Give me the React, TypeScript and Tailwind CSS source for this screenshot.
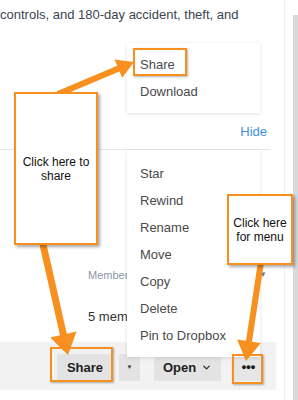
import { ChevronDown } from "lucide-react";

const ORANGE = "#f7901e";

// polygon for a thick arrow with a triangular head
const arrow = (x1: number, y1: number, x2: number, y2: number, w: number, hl: number, hw: number) => {
  const dx = x2 - x1;
  const dy = y2 - y1;
  const len = Math.hypot(dx, dy);
  const ux = dx / len;
  const uy = dy / len;
  const nx = -uy;
  const ny = ux;
  const bx = x2 - ux * hl;
  const by = y2 - uy * hl;
  const pts = [
    [x1 + (nx * w) / 2, y1 + (ny * w) / 2],
    [bx + (nx * w) / 2, by + (ny * w) / 2],
    [bx + (nx * hw) / 2, by + (ny * hw) / 2],
    [x2, y2],
    [bx - (nx * hw) / 2, by - (ny * hw) / 2],
    [bx - (nx * w) / 2, by - (ny * w) / 2],
    [x1 - (nx * w) / 2, y1 - (ny * w) / 2],
  ];
  return pts.map((p) => p.map((v) => v.toFixed(1)).join(",")).join(" ");
};

const MenuItem = ({ label }: { label: string }) => (
  <div className="h-[27px] flex items-center pl-[13px] text-[13px] text-[#4a4a4a]">{label}</div>
);

const App = () => {
  return (
    <div className="relative w-[298px] h-[400px] overflow-hidden bg-white flex font-['Liberation_Sans',Arial,sans-serif]">
      {/* page */}
      <div className="w-[285px] flex flex-col border-r border-[#f0f0f0]">
        <p className="mt-[7px] leading-[16px] text-[13px] text-[#3b4550] whitespace-nowrap">
          controls, and 180-day accident, theft, and
        </p>
        <div className="mt-[101px] mr-[13px] pb-[9px] border-b border-[#e6e6e6] flex justify-end">
          <span className="pr-[4px] leading-[16px] text-[13px] text-[#3d8fe6]">Hide</span>
        </div>
        <div className="mt-[118px] mr-[13px] pl-[88px] pr-[4px] flex items-center justify-between leading-[14px]">
          <span className="w-[39px] overflow-hidden whitespace-nowrap text-[11px] text-[#8a98a8]">Members</span>
          <span className="text-[8px] text-[#777]">▼</span>
        </div>
        <div className="mt-[27px] ml-[88px] w-[39px] overflow-hidden whitespace-nowrap leading-[16px] text-[13px] text-[#333]">
          5 members
        </div>
        <div className="mt-[17px] mr-[8px] h-[48px] bg-[#f2f2f2] flex items-start pt-[12px] text-[13px] font-bold text-[#1e1e1e]">
          <div className="ml-[57px] w-[56px] h-[27px] bg-[#e3e3e3] flex items-center justify-center">Share</div>
          <div className="ml-[6px] w-[21px] h-[27px] bg-[#e3e3e3] flex items-center justify-center text-[6px] text-[#333]">▼</div>
          <div className="ml-[14px] w-[67px] h-[27px] bg-[#e3e3e3] flex items-center justify-center gap-[5px]">
            Open
            <ChevronDown size={11} strokeWidth={2.5} />
          </div>
          <div className="ml-[13px] w-[28px] h-[27px] bg-[#e6e6e6] flex items-center justify-center text-[9px] tracking-[-1px]">●●●</div>
        </div>
      </div>
      <div className="w-[8px]" />
      <div className="w-[5px] mt-[15px] bg-[#d9d9d9]" />

      {/* dropdown menu */}
      <div className="absolute left-[127px] top-[43px] w-[133px] h-[70px] bg-white shadow-[0_1px_4px_rgba(0,0,0,0.12)] pt-[8px]">
        <MenuItem label="Share" />
        <MenuItem label="Download" />
      </div>
      <div className="absolute left-[127px] top-[150px] w-[133px] h-[207px] bg-white shadow-[0_1px_4px_rgba(0,0,0,0.12)] pt-[10px]">
        {["Star", "Rewind", "Rename", "Move", "Copy", "Delete", "Pin to Dropbox"].map((l) => (
          <MenuItem key={l} label={l} />
        ))}
      </div>

      {/* annotations */}
      <svg className="absolute inset-0 pointer-events-none" width="298" height="400">
        <polygon points={arrow(58, 94, 134, 62, 6, 17, 20)} fill={ORANGE} />
        <polygon points={arrow(42, 240, 68, 355, 7, 21, 27)} fill={ORANGE} />
        <polygon points={arrow(261, 262, 246, 361, 6, 20, 24)} fill={ORANGE} />
      </svg>
      <div className="absolute left-[133px] top-[48px] w-[54px] h-[28px] border-2 border-[#f7901e] shadow-[1px_1px_2px_rgba(0,0,0,0.3)]" />
      <div className="absolute left-[50px] top-[347px] w-[63px] h-[35px] border-2 border-[#f7901e] shadow-[1px_1px_2px_rgba(0,0,0,0.3)]" />
      <div className="absolute left-[232px] top-[354px] w-[31px] h-[30px] border-2 border-[#f7901e] shadow-[1px_1px_2px_rgba(0,0,0,0.3)]" />
      <div className="absolute left-[14px] top-[92px] w-[84px] h-[153px] bg-white border-2 border-[#f7901e] shadow-[2px_2px_3px_rgba(0,0,0,0.35)] flex items-center justify-center text-center text-[12px] leading-[14px] text-[#111]">
        Click here to
        <br />
        share
      </div>
      <div className="absolute left-[227px] top-[194px] w-[66px] h-[71px] bg-white border-2 border-[#f7901e] shadow-[2px_2px_3px_rgba(0,0,0,0.35)] flex items-center justify-center text-center text-[12px] leading-[14px] text-[#111]">
        Click here
        <br />
        for menu
      </div>
    </div>
  );
};

export default App;
